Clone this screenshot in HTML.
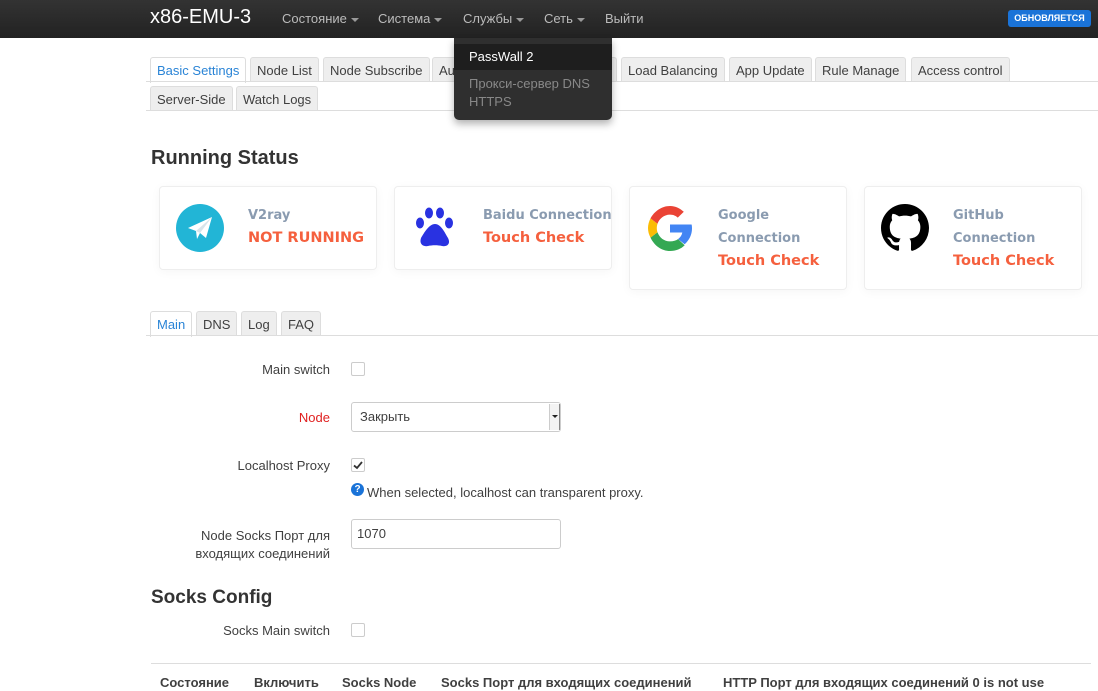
<!DOCTYPE html>
<html><head><meta charset="utf-8"><style>
*{box-sizing:border-box;margin:0;padding:0}
body{width:1098px;height:691px;overflow:hidden;background:#fff;font-family:"Liberation Sans","Noto Sans CJK SC",sans-serif;font-size:13px;color:#404040;position:relative}
.nav{position:absolute;left:0;top:0;width:1098px;height:38px;background:linear-gradient(#333,#222)}
.brand{position:absolute;left:150px;top:6px;font-size:20px;color:#fff}
.nl{position:absolute;top:11px;color:#bbb;font-size:13px}
.caret{display:inline-block;border-left:4px solid transparent;border-right:4px solid transparent;border-top:4px solid #999;vertical-align:middle;margin-left:4px}
.badge{position:absolute;left:1008px;top:10px;width:83px;height:17px;background:#1a73d8;border-radius:3px;color:#fff;font-size:9px;font-weight:bold;text-align:center;line-height:17px}
.tab{position:absolute;height:25px;border:1px solid #ddd;border-bottom:none;background:#eee;border-radius:3px 3px 0 0;padding:0 6px;line-height:25px;font-size:13px;color:#404040;white-space:nowrap}
.tab.act{background:#fff;color:#2a84d6;height:26px}
.line{position:absolute;left:146px;width:952px;height:1px;background:#ddd}
.dd{position:absolute;left:454px;top:38px;width:158px;height:82px;background:#2f2f2f;border-radius:0 0 5px 5px;box-shadow:0 4px 8px rgba(0,0,0,.3)}
h3{position:absolute;font-size:20px;font-weight:bold;color:#333}
.card{position:absolute;top:186px;width:218px;background:#fff;border:1px solid #eee;border-radius:4px;box-shadow:0 2px 10px rgba(0,0,0,.04)}
.ct{position:absolute;left:88px;font-family:"DejaVu Sans",sans-serif;font-weight:bold;font-size:13px;color:#8a9bb0;line-height:23px;top:17px;white-space:nowrap}
.ct b{color:#f5603e;font-size:14.5px;display:block}
.ic{position:absolute;left:16px;top:17px;width:48px;height:48px}
.lab{position:absolute;right:768px;text-align:right;font-size:13px;color:#404040}
.cb{position:absolute;left:351px;width:14px;height:14px;border:1px solid #ccc;border-radius:2px;background:#fff}
.inp{position:absolute;left:351px;width:210px;height:30px;border:1px solid #ccc;border-radius:3px;padding-left:5px;line-height:28px}
</style></head><body>
<div class="nav">
<div class="brand">x86-EMU-3</div>
<div class="nl" style="left:282px">Состояние<span class="caret"></span></div>
<div class="nl" style="left:378px">Система<span class="caret"></span></div>
<div class="nl" style="left:463px">Службы<span class="caret"></span></div>
<div class="nl" style="left:544px">Сеть<span class="caret"></span></div>
<div class="nl" style="left:605px">Выйти</div>
<div class="badge">ОБНОВЛЯЕТСЯ</div>
</div>

<div class="tab act" style="left:150px;top:57px">Basic Settings</div>
<div class="tab" style="left:250px;top:57px">Node List</div>
<div class="tab" style="left:323px;top:57px">Node Subscribe</div>
<div class="tab" style="left:432px;top:57px">Auto Switch</div>
<div class="tab" style="left:520px;top:57px;width:97px">Other Settings</div>
<div class="tab" style="left:621px;top:57px">Load Balancing</div>
<div class="tab" style="left:729px;top:57px">App Update</div>
<div class="tab" style="left:815px;top:57px">Rule Manage</div>
<div class="tab" style="left:911px;top:57px">Access control</div>
<div class="line" style="top:81px"></div>
<div class="tab" style="left:150px;top:86px">Server-Side</div>
<div class="tab" style="left:236px;top:86px">Watch Logs</div>
<div class="line" style="top:110px"></div>

<div class="dd">
<div style="position:absolute;left:0;top:6px;width:158px;height:26px;background:#1e1e1e;color:#fff;padding-left:15px;line-height:26px">PassWall 2</div>
<div style="position:absolute;left:15px;top:37px;color:#888;line-height:18px">Прокси-сервер DNS<br>HTTPS</div>
</div>

<h3 style="left:151px;top:147px">Running Status</h3>
<div class="card" style="left:159px;height:84px">
<svg class="ic" viewBox="0 0 48 48"><circle cx="24" cy="24" r="24" fill="#22b5d6"/><path d="M12 24 L36 13 L30 34 L24 29 L21 35 L20 27 Z" fill="#fff"/><path d="M20 27 L36 13 L24 29 Z" fill="#d8e4ea"/></svg>
<div class="ct">V2ray<b>NOT RUNNING</b></div></div>
<div class="card" style="left:394px;height:84px">
<svg class="ic" viewBox="0 0 48 48"><g fill="#2932e1"><ellipse cx="18" cy="9" rx="4" ry="5.5"/><ellipse cx="29" cy="9" rx="4" ry="5.5"/><ellipse cx="9" cy="19" rx="4" ry="5.5"/><ellipse cx="38" cy="19" rx="4" ry="5.5"/><path d="M24 20 C18 20 13 29 10 34 C8 40 12 43 17 42 C21 41 27 41 31 42 C36 43 40 40 37 34 C34 29 30 20 24 20Z"/></g></svg>
<div class="ct">Baidu Connection<b>Touch Check</b></div></div>
<div class="card" style="left:629px;height:104px">
<svg class="ic" viewBox="0 0 48 48"><path d="M46 24.5c0-1.6-.1-2.8-.4-4H24v8h12.3c-.5 2.8-2 5-4.3 6.6l6.7 5.2C43 36.300 46 31 46 24.5z" fill="#4285f4"/><path d="M24 47c6 0 11-2 14.700-5.700L32 35.100c-2 1.400-4.600 2.300-8 2.300-5.800 0-10.700-3.900-12.500-9.200l-7 5.400C8.200 41.500 15.500 47 24 47z" fill="#34a853"/><path d="M11.500 28.200c-.5-1.300-.7-2.700-.7-4.200s.3-2.900.7-4.200l-7-5.400C3 17.400 2 20.600 2 24s.9 6.600 2.500 9.600z" fill="#fbbc05"/><path d="M24 10.600c3.600 0 6.200 1.500 7.800 3l6-5.800C34.500 4.800 29.800 2 24 2 15.500 2 8.200 7.500 4.500 14.400l7 5.400C13.300 14.500 18.200 10.600 24 10.600z" fill="#ea4335"/></svg>
<div class="ct">Google<br>Connection<b>Touch Check</b></div></div>
<div class="card" style="left:864px;height:104px">
<svg class="ic" viewBox="0 0 16 16"><path fill="#000" d="M8 0C3.580 0 0 3.580 0 8c0 3.540 2.290 6.530 5.470 7.590.4.070.55-.17.55-.38 0-.19-.01-.82-.01-1.490-2.010.37-2.530-.49-2.690-.94-.09-.23-.48-.94-.82-1.130-.28-.15-.68-.52-.01-.53.63-.01 1.080.58 1.230.82.72 1.210 1.870.87 2.330.66.07-.52.28-.87.51-1.070-1.780-.2-3.640-.89-3.640-3.950 0-.87.31-1.590.82-2.150-.08-.2-.36-1.020.08-2.120 0 0 .67-.21 2.200.82.64-.18 1.320-.27 2-.27.68 0 1.360.09 2 .27 1.530-1.040 2.200-.82 2.200-.82.44 1.100.16 1.920.08 2.120.51.56.82 1.270.82 2.150 0 3.070-1.870 3.750-3.650 3.950.29.25.54.73.54 1.480 0 1.070-.01 1.930-.01 2.200 0 .21.15.46.55.38A8.013 8.013 0 0016 8c0-4.420-3.580-8-8-8z"/></svg>
<div class="ct">GitHub<br>Connection<b>Touch Check</b></div></div>

<div class="tab act" style="left:150px;top:311px">Main</div>
<div class="tab" style="left:196px;top:311px">DNS</div>
<div class="tab" style="left:241px;top:311px">Log</div>
<div class="tab" style="left:281px;top:311px">FAQ</div>
<div class="line" style="top:335px"></div>

<div class="lab" style="top:362px">Main switch</div>
<div class="cb" style="top:362px"></div>
<div class="lab" style="top:410px;color:#e02020">Node</div>
<div class="inp" style="top:402px;padding-left:8px;width:210px">Закрыть<div style="position:absolute;right:1px;top:1px;width:10px;height:26px;border-left:1px solid #ccc;background:#f3f3f3;box-shadow:1px 0 0 #888"><span style="position:absolute;left:2px;top:11px;border-left:3px solid transparent;border-right:3px solid transparent;border-top:3px solid #222"></span></div></div>
<div class="lab" style="top:458px">Localhost Proxy</div>
<div class="cb" style="top:458px"><svg width="12" height="12" viewBox="0 0 12 12" style="position:absolute;left:0;top:0"><path d="M2 6.5 L5 9 L10 3" stroke="#333" stroke-width="1.8" fill="none"/></svg></div>
<div style="position:absolute;left:351px;top:483px;width:13px;height:13px;border-radius:50%;background:#1a73d8;color:#fff;font-size:10px;font-weight:bold;text-align:center;line-height:13px">?</div>
<div style="position:absolute;left:367px;top:485px">When selected, localhost can transparent proxy.</div>
<div class="lab" style="top:527px;line-height:18px">Node Socks Порт для<br>входящих соединений</div>
<div class="inp" style="top:519px">1070</div>

<h3 style="left:151px;top:587px;font-size:19px">Socks Config</h3>
<div class="lab" style="top:623px">Socks Main switch</div>
<div class="cb" style="top:623px"></div>
<div style="position:absolute;left:151px;top:663px;width:940px;height:1px;background:#ddd"></div>
<div style="position:absolute;top:675px;left:160px;font-weight:bold">Состояние</div>
<div style="position:absolute;top:675px;left:254px;font-weight:bold">Включить</div>
<div style="position:absolute;top:675px;left:342px;font-weight:bold">Socks Node</div>
<div style="position:absolute;top:675px;left:441px;font-weight:bold">Socks Порт для входящих соединений</div>
<div style="position:absolute;top:675px;left:723px;font-weight:bold">HTTP Порт для входящих соединений 0 is not use</div>
</body></html>
